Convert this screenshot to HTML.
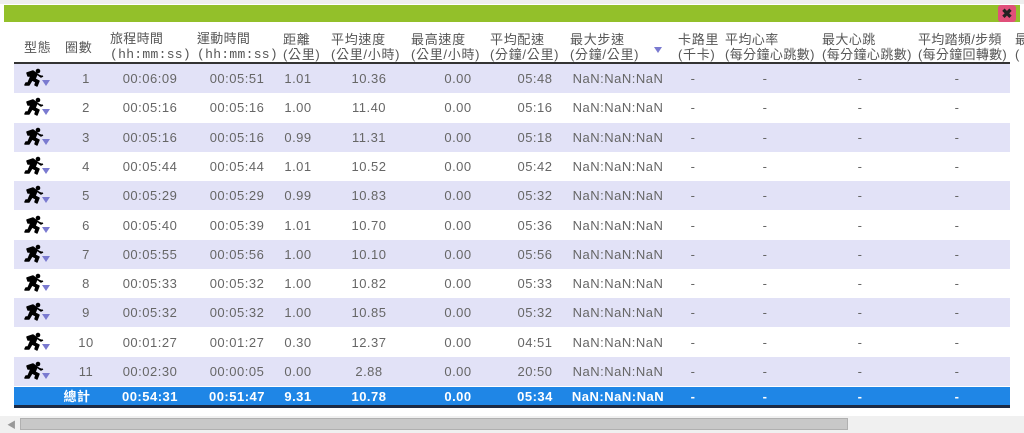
<!DOCTYPE html>
<html><head><meta charset="utf-8"><style>
*{margin:0;padding:0;box-sizing:border-box}
body{width:1024px;height:433px;background:#fff;position:relative;overflow:hidden;font-family:"Liberation Sans","Noto Sans CJK TC",sans-serif;color:#666;font-size:13px}
.a{position:absolute;white-space:nowrap}
.bar{left:4px;top:5px;width:1016px;height:17px;background:#93c02a}
.x{left:998px;top:5px;width:18px;height:17px;background:#e0507a;border-radius:3px;color:#222;font-weight:bold;text-align:center;line-height:17px;font-size:13px}
.h{top:32px;font-size:13px;line-height:15px;color:#555;letter-spacing:0.7px}
.m{font-family:"Liberation Mono","Noto Sans CJK TC",monospace;letter-spacing:0.3px}
.row{position:absolute;left:14px;width:996px;height:29px}
.s{background:#e2e2f7}
.c{position:absolute;top:0;line-height:29px;text-align:center;transform:translateX(-50%);letter-spacing:0.5px}
.tot{position:absolute;left:14px;top:387px;width:996px;height:21px;background:#1f86e6;border-bottom:3px solid #1c2a44}
.tot .c{line-height:19px;color:#fff;font-weight:bold}
.tri{position:absolute;width:0;height:0;border-left:4px solid transparent;border-right:4px solid transparent;border-top:6px solid #7a7ad0}
</style></head><body>
<div class="a" style="left:0;top:0;width:1024px;height:4px;background:#eee"></div>
<div class="a bar"></div>
<div class="a x">✖</div>
<div class="a h" style="left:24px;top:40px">型態</div>
<div class="a h" style="left:65px;top:40px">圈數</div>
<div class="a h m" style="left:110px">旅程時間<br>(hh:mm:ss)</div>
<div class="a h m" style="left:197px">運動時間<br>(hh:mm:ss)</div>
<div class="a h" style="left:283px">距離<br>(公里)</div>
<div class="a h" style="left:331px">平均速度<br>(公里/小時)</div>
<div class="a h" style="left:411px">最高速度<br>(公里/小時)</div>
<div class="a h" style="left:490px">平均配速<br>(分鐘/公里)</div>
<div class="a h" style="left:570px">最大步速<br>(分鐘/公里)</div>
<div class="tri" style="left:654px;top:47px"></div>
<div class="a h" style="left:678px">卡路里<br>(千卡)</div>
<div class="a h" style="left:725px;letter-spacing:0.4px">平均心率<br>(每分鐘心跳數)</div>
<div class="a h" style="left:822px;letter-spacing:0.4px">最大心跳<br>(每分鐘心跳數)</div>
<div class="a h" style="left:918px;letter-spacing:0.3px">平均踏頻/步頻<br>(每分鐘回轉數)</div>
<div class="a h" style="left:1015px">最<br>(</div>
<div class="a" style="left:14px;top:62px;width:996px;height:2px;background:#333"></div>
<div id="rows"></div>
<div class="tot">
<div class="c" style="left:63px">總計</div>
<div class="c" style="left:136px">00:54:31</div>
<div class="c" style="left:223px">00:51:47</div>
<div class="c" style="left:284px">9.31</div>
<div class="c" style="left:355px">10.78</div>
<div class="c" style="left:444px">0.00</div>
<div class="c" style="left:521px">05:34</div>
<div class="c" style="left:604px">NaN:NaN:NaN</div>
<div class="c" style="left:679px">-</div>
<div class="c" style="left:751px">-</div>
<div class="c" style="left:846px">-</div>
<div class="c" style="left:943px">-</div>
</div>
<div class="a" style="left:0;top:416px;width:1024px;height:17px;background:#f0f0f0"></div>
<div class="a" style="left:20px;top:418px;width:828px;height:12px;background:#c8c8c8;border:1px solid #b0b0b0"></div>
<div class="a" style="left:7px;top:418px;font-size:9px;color:#999">◀</div>
<script>
var d=[[1,"00:06:09","00:05:51","1.01","10.36","05:48"],[2,"00:05:16","00:05:16","1.00","11.40","05:16"],[3,"00:05:16","00:05:16","0.99","11.31","05:18"],[4,"00:05:44","00:05:44","1.01","10.52","05:42"],[5,"00:05:29","00:05:29","0.99","10.83","05:32"],[6,"00:05:40","00:05:39","1.01","10.70","05:36"],[7,"00:05:55","00:05:56","1.00","10.10","05:56"],[8,"00:05:33","00:05:32","1.00","10.82","05:33"],[9,"00:05:32","00:05:32","1.00","10.85","05:32"],[10,"00:01:27","00:01:27","0.30","12.37","04:51"],[11,"00:02:30","00:00:05","0.00","2.88","20:50"]];
var icon='<svg width="22" height="20" viewBox="0 0 22 20" style="position:absolute;left:10px;top:4px"><circle cx="14" cy="3" r="2.3" fill="#000"/><path d="M3 5 L9 3 L13 6 L11 11 L15 13 L13 18 L11 17 L12 14 L8 12 L5 17 L1 17 L2 15 L4 15 L7 8 L4 8 Z M13 6 L17 9 L19 8" fill="#000" stroke="#000" stroke-width="1.5" stroke-linejoin="round"/></svg><div class="tri" style="left:28px;top:16px"></div>';
var h="";
d.forEach(function(r,i){
h+='<div class="row'+(i%2==0?' s':'')+'" style="top:'+(64+i*29.3)+'px">'+icon+
'<div class="c" style="left:72px">'+r[0]+'</div><div class="c" style="left:136px">'+r[1]+'</div><div class="c" style="left:223px">'+r[2]+'</div><div class="c" style="left:284px">'+r[3]+'</div><div class="c" style="left:355px">'+r[4]+'</div><div class="c" style="left:444px">0.00</div><div class="c" style="left:521px">'+r[5]+'</div><div class="c" style="left:604px">NaN:NaN:NaN</div><div class="c" style="left:679px">-</div><div class="c" style="left:751px">-</div><div class="c" style="left:846px">-</div><div class="c" style="left:943px">-</div></div>';});
document.getElementById("rows").innerHTML=h;
</script>
</body></html>
